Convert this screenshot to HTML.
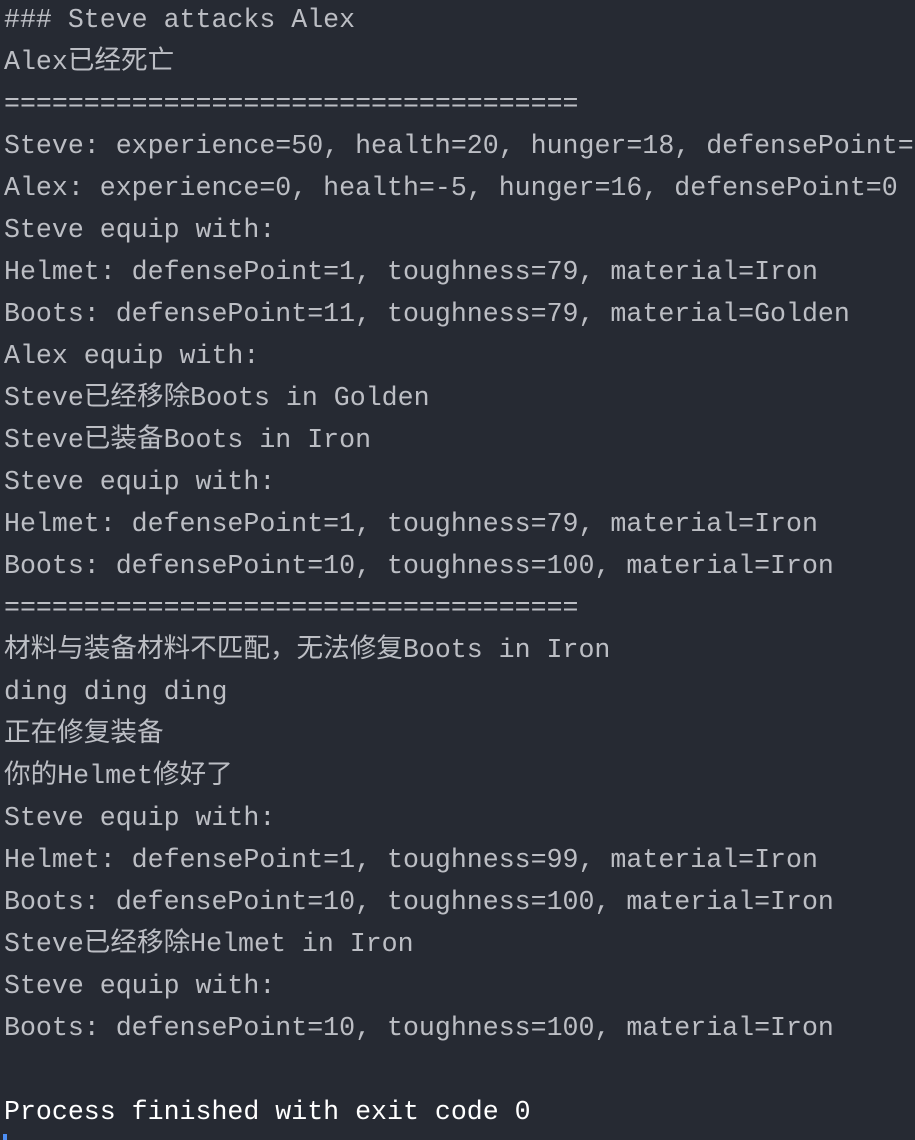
<!DOCTYPE html>
<html><head><meta charset="utf-8"><style>
html,body{margin:0;padding:0;background:#262a33;width:915px;height:1140px;overflow:hidden}
pre{margin:0;position:absolute;left:4px;top:-1px;font-family:"Liberation Mono","Noto Sans CJK SC",monospace;font-size:26.6px;line-height:42px;color:#bcbec4;white-space:pre}
.w{color:#ffffff}
.cur{position:absolute;left:3px;top:1134px;width:4px;height:6px;background:#4d8ff5}
</style></head><body>
<pre>### Steve attacks Alex
Alex已经死亡
====================================
Steve: experience=50, health=20, hunger=18, defensePoint=
Alex: experience=0, health=-5, hunger=16, defensePoint=0
Steve equip with:
Helmet: defensePoint=1, toughness=79, material=Iron
Boots: defensePoint=11, toughness=79, material=Golden
Alex equip with:
Steve已经移除Boots in Golden
Steve已装备Boots in Iron
Steve equip with:
Helmet: defensePoint=1, toughness=79, material=Iron
Boots: defensePoint=10, toughness=100, material=Iron
====================================
材料与装备材料不匹配，无法修复Boots in Iron
ding ding ding
正在修复装备
你的Helmet修好了
Steve equip with:
Helmet: defensePoint=1, toughness=99, material=Iron
Boots: defensePoint=10, toughness=100, material=Iron
Steve已经移除Helmet in Iron
Steve equip with:
Boots: defensePoint=10, toughness=100, material=Iron

<span class="w">Process finished with exit code 0</span></pre>
<div class="cur"></div>
</body></html>
